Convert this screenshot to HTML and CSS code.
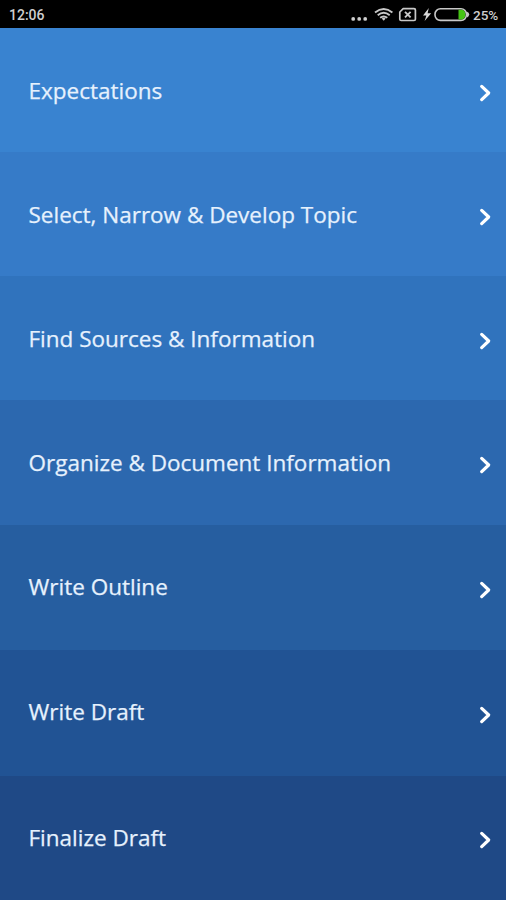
FILE: index.html
```
<!DOCTYPE html>
<html lang="en">
<head>
    <meta charset="UTF-8">
    <meta name="viewport" content="width=device-width, initial-scale=1.0">
    <title>Research Steps</title>
    <link rel="stylesheet" href="styles.css">
</head>
<body>
    <!-- Phone status bar -->
    <header class="status-bar">
        <span class="clock">12:06</span>
        <!-- Dots, wifi, SIM, charging bolt and battery -->
        <svg class="status-icons" width="122" height="28" viewBox="0 0 122 28">
            <g fill="#cfcfcf">
                <circle cx="4.2" cy="18.9" r="1.9"/>
                <circle cx="10.2" cy="18.9" r="1.9"/>
                <circle cx="16.2" cy="18.9" r="1.9"/>
            </g>
            <g fill="none" stroke="#c8c8c8" stroke-width="1.9">
                <path d="M26 12.4Q34.7 5.6 43.4 12.4"/>
                <path d="M28.7 15.2Q34.7 10.4 40.7 15.2"/>
                <path d="M31.1 17.8Q34.7 15 38.3 17.8"/>
            </g>
            <path d="M32.7 18.5Q34.7 17 36.7 18.5L34.7 20.8z" fill="#c8c8c8"/>
            <path d="M54.2 8.7H65Q66.4 8.7 66.4 10V19.2Q66.4 20.5 65 20.5H52.2Q50.8 20.5 50.8 19.2V12z" fill="none" stroke="#c8c8c8" stroke-width="1.7" stroke-linejoin="round"/>
            <path d="M56 11.8L61.6 17.4M61.6 11.8L56 17.4" stroke="#c8c8c8" stroke-width="1.9"/>
            <path d="M79.8 8L74 15.4H77.4L75.6 21L82.2 13.2H78.6z" fill="#d8d8d8"/>
            <rect x="86" y="8.8" width="31.4" height="11.6" rx="5.4" fill="none" stroke="#c8c8c8" stroke-width="1.6"/>
            <path d="M118 11.8Q120.2 12.4 120.2 14.6T118 17.4z" fill="#c8c8c8"/>
            <path d="M109.5 9.8H113Q116.4 10.6 116.4 14.6T113 19.4H109.5z" fill="#45c414"/>
        </svg>
        <span class="battery-text">25%</span>
    </header>

    <!-- List of steps, one colored row each -->
    <main class="steps">
        <a class="step step-1">
            <span class="label">Expectations</span>
            <svg class="arrow" viewBox="0 0 12 18"><path d="M2.7 2.4L9.7 9L2.7 15.6"/></svg>
        </a>
        <a class="step step-2">
            <span class="label">Select, Narrow &amp; Develop Topic</span>
            <svg class="arrow" viewBox="0 0 12 18"><path d="M2.7 2.4L9.7 9L2.7 15.6"/></svg>
        </a>
        <a class="step step-3">
            <span class="label">Find Sources &amp; Information</span>
            <svg class="arrow" viewBox="0 0 12 18"><path d="M2.7 2.4L9.7 9L2.7 15.6"/></svg>
        </a>
        <a class="step step-4">
            <span class="label">Organize &amp; Document Information</span>
            <svg class="arrow" viewBox="0 0 12 18"><path d="M2.7 2.4L9.7 9L2.7 15.6"/></svg>
        </a>
        <a class="step step-5">
            <span class="label">Write Outline</span>
            <svg class="arrow" viewBox="0 0 12 18"><path d="M2.7 2.4L9.7 9L2.7 15.6"/></svg>
        </a>
        <a class="step step-6">
            <span class="label">Write Draft</span>
            <svg class="arrow" viewBox="0 0 12 18"><path d="M2.7 2.4L9.7 9L2.7 15.6"/></svg>
        </a>
        <a class="step step-7">
            <span class="label">Finalize Draft</span>
            <svg class="arrow" viewBox="0 0 12 18"><path d="M2.7 2.4L9.7 9L2.7 15.6"/></svg>
        </a>
    </main>
</body>
</html>
```
FILE: styles.css
```
body {
    margin: 0;
    background-color: #1f4986;
    font-family: 'Open Sans', 'Noto Sans', sans-serif;
    color: #e6f1fd;
}

/* Black bar on top */
.status-bar {
    display: flex;
    align-items: center;
    box-sizing: border-box;
    height: 28px;
    padding: 0 8px 0 9px;
    background-color: #000;
    color: #cfcfcf;
    font-family: Roboto, sans-serif;
    font-size: 14px;
    font-weight: 500;
}

.clock,
.battery-text {
    line-height: 28px;
    padding-top: 2px;
}

.status-icons {
    margin-left: auto;
    margin-right: 2px;
}

.battery-text {
    width: 25px;
    font-size: 13.5px;
    white-space: nowrap;
}

/* Rows fill the rest of the screen */
.steps {
    display: grid;
    grid-template-rows: 124px 124px 124px 125px 125px 126px 124px;
}

.step {
    display: flex;
    align-items: flex-start;
    justify-content: space-between;
    padding: 48px 15px 0 28.5px;
}

.label {
    font-size: 22.5px;
    line-height: 30px;
    white-space: nowrap;
    -webkit-text-stroke: 0.25px #e6f1fd;
}

.arrow {
    width: 12px;
    height: 18px;
    margin-top: 8px;
    fill: none;
    stroke: #fff;
    stroke-width: 3.2;
    stroke-linecap: round;
    stroke-linejoin: round;
}

/* Row colors, light to dark */
.step-1 { background-color: #3983d0; }
.step-2 { background-color: #367bc8; }
.step-3 { background-color: #3073bd; }
.step-4 { background-color: #2c68af; }
.step-5 { background-color: #265ea0; }
.step-6 { background-color: #215394; }
.step-7 { background-color: #1f4986; }

/* The lower rows sit a little higher */
.step-5,
.step-6,
.step-7 {
    padding-top: 47px;
}

.step-5 .arrow,
.step-6 .arrow {
    margin-top: 9px;
}
```
